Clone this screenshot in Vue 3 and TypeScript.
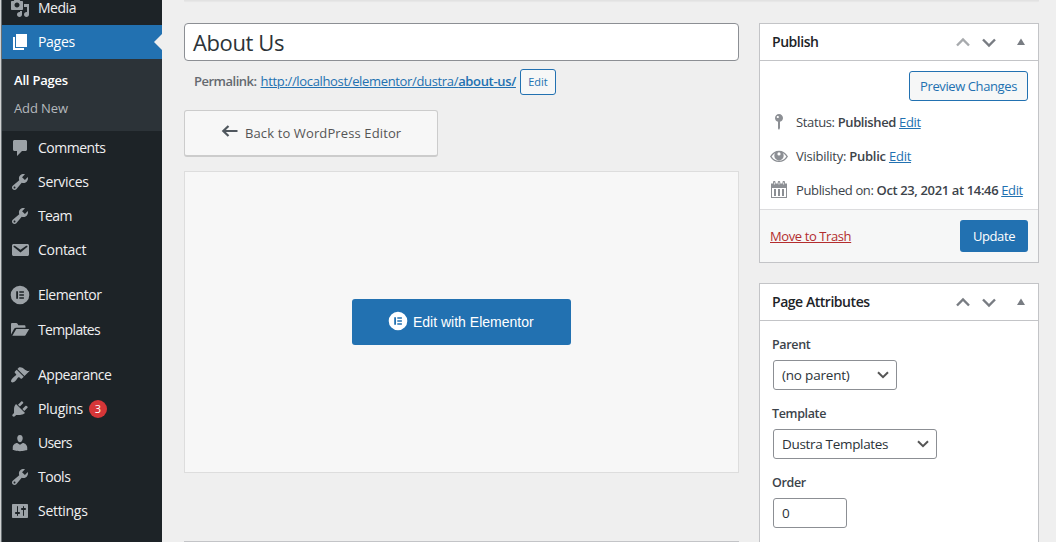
<script setup lang="ts">
interface MenuItem {
  label: string
  icon: string
  cls?: string
  badge?: number
}

const wrench =
  'M16.68 9.77c-1.34 1.34-3.3 1.67-4.95.99l-5.41 6.52c-.99.99-2.59.99-3.58 0s-.99-2.59 0-3.57l6.52-5.42c-.68-1.65-.35-3.61.99-4.95 1.28-1.28 3.12-1.62 4.72-1.06l-2.89 2.89 2.82 2.82 2.86-2.87c.53 1.58.18 3.39-1.08 4.65zM3.81 16.21c.4.39 1.04.39 1.43 0 .4-.4.4-1.04 0-1.43-.39-.4-1.03-.4-1.43 0-.39.39-.39 1.03 0 1.43z'

const topItems: MenuItem[] = [
  {
    label: 'Media',
    icon: 'M13 11V4c0-.55-.45-1-1-1h-1.67L9 1H5L3.67 3H2c-.55 0-1 .45-1 1v7c0 .55.45 1 1 1h10c.55 0 1-.45 1-1zM7 4.5c1.38 0 2.5 1.12 2.5 2.5S8.38 9.5 7 9.5 4.5 8.38 4.5 7 5.62 4.5 7 4.5zM14 6h5v10.5c0 1.38-1.12 2.5-2.5 2.5S14 17.88 14 16.5s1.12-2.5 2.5-2.5c.17 0 .34.02.5.05V9h-3V6zm-4 8.05V13h2v3.5c0 1.38-1.12 2.5-2.5 2.5S7 17.88 7 16.5 8.12 14 9.5 14c.17 0 .34.02.5.05z',
  },
  { label: 'Pages', icon: 'M6 15V2h11v13H6zm-1 1h9v2H3V5h2v11z', cls: 'current' },
]

const items: MenuItem[] = [
  {
    label: 'Comments',
    icon: 'M4.5 2h11c.8 0 1.5.7 1.5 1.5v8c0 .8-.7 1.5-1.5 1.5H12l-5 5v-5H4.5c-.8 0-1.5-.7-1.5-1.5v-8C3 2.700 3.700 2 4.500 2z',
  },
  { label: 'Services', icon: wrench, cls: 'loose' },
  { label: 'Team', icon: wrench, cls: 'snug' },
  {
    label: 'Contact',
    icon: 'M3.87 4h13.25C18.37 4 19 4.59 19 5.79v8.42c0 1.19-.63 1.79-1.88 1.79H3.87c-1.25 0-1.88-.6-1.88-1.79V5.79c0-1.2.63-1.79 1.88-1.79zm6.62 8.6l6.74-5.53c.24-.2.43-.66.13-1.07-.29-.41-.82-.42-1.17-.17l-5.7 3.86L4.8 5.83c-.35-.25-.88-.24-1.17.17-.3.41-.11.87.13 1.07z',
    cls: 'loose',
  },
  {
    label: 'Elementor',
    icon: 'M10 .7a9.300 9.300 0 1 0 0 18.600a9.300 9.300 0 1 0 0-18.600zM6.200 6.200H8v7.600H6.200zM9.300 6.200h4.600v1.600H9.300zM9.300 9.200h4.600v1.600H9.300zM9.300 12.200h4.600v1.600H9.300z',
    cls: 'gap',
  },
  {
    label: 'Templates',
    icon: 'M1 14.500V4.400C1 3.500 1.500 3 2.400 3h3.800c.6 0 1 .2 1.300.7l.9 1.600h5.800c.8 0 1.300.5 1.300 1.200v1.300H6.200c-1 0-1.700.4-2.200 1.200zM6.300 9h12.900L15.800 14.800c-.4.7-.8 1-1.600 1H2.300z',
    cls: 'tall snug',
  },
  {
    label: 'Appearance',
    icon: 'M14.48 11.06L7.41 3.99l1.5-1.5c.5-.56 2.3-.47 3.51.32 1.21.8 1.43 1.28 2.91 2.1 1.18.64 2.45 1.26 4.45.85zm-.71.71L6.7 4.7 4.93 6.47c-.39.39-.39 1.02 0 1.41l1.06 1.06c.39.39.39 1.03 0 1.42-.6.6-1.43 1.11-2.21 1.69-.35.26-.7.53-1.01.84C1.43 14.23.4 16.08 1.4 17.07c.99 1 2.84-.03 4.18-1.36.31-.31.58-.66.85-1.02.57-.78 1.08-1.61 1.69-2.21.39-.39 1.02-.39 1.41 0l1.06 1.06c.39.39 1.02.39 1.41 0z',
    cls: 'gap',
  },
  {
    label: 'Plugins',
    icon: 'M13.11 4.36L9.87 7.6 8 5.73l3.24-3.24c.35-.34 1.05-.2 1.56.32.52.51.66 1.21.31 1.55zm-8 1.77l.91-1.12 9.01 9.01-1.19.84c-.71.71-2.63 1.16-3.82 1.16H6.14L4.9 17.26c-.59.59-1.54.59-2.12 0-.59-.58-.59-1.53 0-2.12l1.24-1.24v-3.88c0-1.13.4-3.19 1.09-3.89zm7.26 3.97l3.24-3.24c.34-.35 1.04-.21 1.55.31.52.51.66 1.21.31 1.55l-3.24 3.25z',
    cls: 'loose',
    badge: 3,
  },
  {
    label: 'Users',
    icon: 'M10 9.25c-2.27 0-2.73-3.44-2.73-3.44C7 4.02 7.82 2 9.97 2c2.16 0 2.98 2.02 2.71 3.81 0 0-.41 3.44-2.68 3.44zm0 2.57L12.72 10c2.39 0 4.52 2.33 4.52 4.53v2.49s-3.65 1.13-7.24 1.13c-3.65 0-7.24-1.13-7.24-1.13v-2.49c0-2.25 1.94-4.48 4.47-4.48z',
    cls: 'snug',
  },
  { label: 'Tools', icon: wrench },
  {
    label: 'Settings',
    icon: 'M18 16V4c0-.55-.45-1-1-1H3c-.55 0-1 .45-1 1v12c0 .55.45 1 1 1h14c.55 0 1-.45 1-1zM8 11h1c.55 0 1 .45 1 1s-.45 1-1 1H8v1.5c0 .28-.22.5-.5.5s-.5-.22-.5-.5V13H6c-.55 0-1-.45-1-1s.45-1 1-1h1V5.5c0-.28.22-.5.5-.5s.5.22.5.5V11zm5-2h-1c-.55 0-1-.45-1-1s.45-1 1-1h1V5.5c0-.28.22-.5.5-.5s.5.22.5.5V7h1c.55 0 1 .45 1 1s-.45 1-1 1h-1v5.5c0 .28-.22.5-.5.5s-.5-.22-.5-.5V9z',
    cls: 'loose',
  },
]
</script>

<template>
  <div class="page">
    <nav class="sidebar">
      <a v-for="m in topItems" :key="m.label" class="item" :class="m.cls">
        <svg class="micon" viewBox="0 0 20 20"><path fill-rule="evenodd" :d="m.icon" /></svg>
        <span class="name">{{ m.label }}</span>
      </a>
      <div class="submenu">
        <a class="sub active">All Pages</a>
        <a class="sub">Add New</a>
      </div>
      <a v-for="m in items" :key="m.label" class="item" :class="m.cls">
        <svg class="micon" viewBox="0 0 20 20"><path fill-rule="evenodd" :d="m.icon" /></svg>
        <span class="name">{{ m.label }}</span>
        <span v-if="m.badge" class="badge">{{ m.badge }}</span>
      </a>
    </nav>

    <main class="body">
      <div class="notice"></div>
      <div class="columns">
        <section class="main-col">
          <div class="title">About Us</div>
          <div class="permalink">
            <strong>Permalink:</strong>
            <a class="url">http://localhost/elementor/dustra/<b>about-us/</b></a>
            <button class="btn small">Edit</button>
          </div>
          <button class="back">
            <svg class="arrow" viewBox="0 0 18 14">
              <path d="M7.500 2 2.300 7l5.200 5M2.500 7h14" fill="none" stroke="#50575e" stroke-width="2.200" />
            </svg>
            <span>Back to WordPress Editor</span>
          </button>
          <div class="canvas">
            <button class="elementor">
              <svg viewBox="0 0 20 20">
                <path
                  fill="#fff"
                  fill-rule="evenodd"
                  d="M10 .7a9.300 9.300 0 1 0 0 18.600a9.300 9.300 0 1 0 0-18.600zM6.200 6.200H8v7.600H6.200zM9.300 6.200h4.600v1.500H9.300zM9.300 9.250h4.600v1.500H9.300zM9.300 12.300h4.600v1.500H9.300z"
                />
              </svg>
              <span>Edit with Elementor</span>
            </button>
          </div>
          <div class="nextbox"></div>
        </section>

        <aside class="side-col">
          <section class="panel publish">
            <header class="head">
              <h2>Publish</h2>
              <svg class="handles" viewBox="0 0 76 20">
                <path d="M4 13.500 10 7.500l6 6" class="stroke faded" />
                <path d="M30 7.500l6 6 6-6" class="stroke" />
                <path d="M64 13h8l-4-6.500z" class="tri" />
              </svg>
            </header>
            <div class="preview-row"><button class="btn preview">Preview Changes</button></div>
            <div class="row status">
              <svg viewBox="0 0 20 20">
                <path fill-rule="evenodd" d="M14 6c0 1.860-1.280 3.410-3 3.860V16l-1 2-1-1.500V9.860C7.280 9.410 6 7.860 6 6c0-2.210 1.790-4 4-4s4 1.790 4 4zM7.700 5c0 .6.500 1.100 1.100 1.100S9.900 5.600 9.900 5 9.400 3.900 8.800 3.900 7.700 4.400 7.700 5z" />
              </svg>
              <p>Status: <b>Published</b> <a>Edit</a></p>
            </div>
            <div class="row visibility">
              <svg viewBox="0 0 20 20">
                <path fill-rule="evenodd" d="M1 10.500C3.300 6.700 6.300 4.700 10 4.700s6.700 2 9 5.800c-2.300 3.700-5.300 5.500-9 5.500s-6.700-1.800-9-5.500zm1.600 0c2 2.900 4.400 4.300 7.400 4.300s5.400-1.400 7.400-4.300C16.400 9 15.200 7.900 13.800 7.100c.6.700.9 1.600.9 2.600a4.700 4.700 0 0 1-9.400 0c0-1 .3-1.900.9-2.600C4.800 7.900 3.600 9 2.600 10.500zM10 6.300a1.600 1.600 0 1 0 0 3.200 1.600 1.600 0 0 0 0-3.200z" />
              </svg>
              <p>Visibility: <b>Public</b> <a>Edit</a></p>
            </div>
            <div class="row date">
              <svg viewBox="0 0 20 20">
                <path fill-rule="evenodd" d="M2 3.500h2V2.300c0-.8.500-1.300 1.250-1.300S6.500 1.500 6.500 2.300v1.200h2.250V2.300C8.750 1.500 9.250 1 10 1s1.250.5 1.250 1.300v1.200h2.250V2.300c0-.8.500-1.300 1.250-1.300S16 1.500 16 2.300v1.200h2V18H2zM3 8v9h14V8zM4.900 2.500v2h.8v-2zM9.600 2.500v2h.8v-2zM14.300 2.500v2h.8v-2zM5 9h2v7H5zM9 9h2v7H9zM13 9h2v7h-2z" />
              </svg>
              <p>Published on: <b>Oct 23, 2021 at 14:46</b> <a>Edit</a></p>
            </div>
            <footer class="foot">
              <a class="trash">Move to Trash</a>
              <button class="update">Update</button>
            </footer>
          </section>

          <section class="panel attrs">
            <header class="head">
              <h2>Page Attributes</h2>
              <svg class="handles" viewBox="0 0 76 20">
                <path d="M4 13.500 10 7.500l6 6" class="stroke" />
                <path d="M30 7.500l6 6 6-6" class="stroke" />
                <path d="M64 13h8l-4-6.500z" class="tri" />
              </svg>
            </header>
            <div class="fields">
              <label>Parent</label>
              <div class="field parent">
                <span>(no parent)</span>
                <svg viewBox="0 0 12 8"><path d="M1 1.200l5 5 5-5" /></svg>
              </div>
              <label>Template</label>
              <div class="field template">
                <span>Dustra Templates</span>
                <svg viewBox="0 0 12 8"><path d="M1 1.200l5 5 5-5" /></svg>
              </div>
              <label>Order</label>
              <div class="field order"><span>0</span></div>
            </div>
          </section>
        </aside>
      </div>
    </main>
  </div>
</template>

<style>
body {
  margin: 0;
  overflow: hidden;
}
</style>

<style scoped>
.page {
  display: flex;
  width: 1056px;
  height: 542px;
  overflow: hidden;
  background: #efefef;
  font-family: 'Open Sans', 'Noto Sans', sans-serif;
  font-size: 13px;
  color: #3c434a;
}
.page * {
  box-sizing: border-box;
}
button {
  font-family: inherit;
  margin: 0;
  padding: 0;
}
.sidebar {
  flex: none;
  width: 162px;
  height: 560px;
  margin-top: -9px;
  background: #1d2327;
  border-left: 1px solid #d0d2d3;
  box-shadow: inset 1px 0 0 #697074;
  padding-left: 1px;
}
.item {
  position: relative;
  display: flex;
  align-items: center;
  height: 34px;
  padding-left: 8px;
  color: #f0f0f1;
  font-size: 14px;
  letter-spacing: -0.48px;
}
.name {
  padding-bottom: 2px;
}
.loose {
  letter-spacing: -0.3px;
}
.snug {
  letter-spacing: -0.65px;
}
.micon {
  width: 20px;
  height: 20px;
  margin-right: 8px;
  fill: #9ca2a7;
}
.current {
  background: #2271b1;
  color: #fff;
  letter-spacing: -0.3px;
}
.current .micon {
  fill: #fff;
}
.current::after {
  content: '';
  position: absolute;
  right: 0;
  top: 9px;
  border: 8px solid transparent;
  border-left-width: 0;
  border-right-color: #efefef;
}
.gap {
  margin-top: 11px;
}
.tall {
  margin-top: 1px;
}
.submenu {
  height: 72px;
  padding: 7px 0 0 12px;
  background: #2c3338;
}
.sub {
  display: block;
  height: 28px;
  line-height: 28px;
  color: #b4b9bd;
  letter-spacing: -0.1px;
}
.sub.active {
  color: #fff;
  font-weight: 600;
  letter-spacing: -0.2px;
}
.badge {
  width: 18px;
  height: 18px;
  margin-left: 6px;
  border-radius: 9px;
  background: #d63638;
  color: #fff;
  font-size: 11px;
  line-height: 18px;
  text-align: center;
  letter-spacing: 0;
}
.body {
  flex: 1;
  padding: 0 17px 0 22px;
}
.notice {
  width: 855px;
  height: 1px;
  background: #e2e2e2;
  box-shadow: 0 1px 1px rgba(0, 0, 0, 0.04);
}
.columns {
  display: flex;
  gap: 20px;
  padding-top: 22px;
}
.main-col {
  width: 555px;
}
.title {
  height: 38px;
  padding-left: 8px;
  border: 1px solid #8c8f94;
  border-radius: 4px;
  background: #fff;
  color: #2c3338;
  font-size: 22px;
  line-height: 37px;
  letter-spacing: -0.4px;
}
.permalink {
  display: flex;
  align-items: center;
  height: 26px;
  margin-top: 8px;
  padding-left: 10px;
  color: #646970;
  letter-spacing: -0.34px;
}
.permalink strong {
  font-weight: 600;
  margin-right: 4px;
  padding-bottom: 2px;
  letter-spacing: -0.5px;
}
.url {
  padding-bottom: 2px;
  color: #2271b1;
  text-decoration: underline;
}
.url b {
  font-weight: 600;
}
.btn {
  height: 30px;
  width: 119px;
  border: 1px solid #2271b1;
  border-radius: 3px;
  background: #f6f7f7;
  color: #2271b1;
  font-size: 13px;
}
.preview {
  letter-spacing: -0.4px;
}
.btn.small {
  width: 36px;
  height: 26px;
  margin-left: 4px;
  padding-bottom: 1px;
  font-size: 11px;
}
.back {
  display: flex;
  align-items: center;
  width: 254px;
  height: 47px;
  margin-top: 15px;
  padding-left: 36px;
  border: 1px solid #ccc;
  border-bottom-width: 2px;
  border-radius: 3px;
  background: #f7f7f7;
  color: #555;
  font-size: 13px;
  letter-spacing: 0.12px;
}
.arrow {
  width: 18px;
  height: 14px;
  margin: -4px 6px 0 0;
}
.canvas {
  display: flex;
  align-items: center;
  justify-content: center;
  height: 302px;
  margin-top: 14px;
  border: 1px solid #ddd;
  background: #f7f7f7;
}
.elementor {
  display: flex;
  align-items: center;
  width: 219px;
  height: 46px;
  padding-left: 36px;
  border: 0;
  border-radius: 3px;
  background: #2271b1;
  color: #fff;
  font-family: 'Liberation Sans', Arial, sans-serif;
  font-size: 14px;
}
.elementor svg {
  width: 20px;
  height: 20px;
  margin: -3px 5px 0 0;
}
.nextbox {
  height: 40px;
  margin-top: 68px;
  border: 1px solid #c3c4c7;
  background: #fff;
}
.side-col {
  width: 280px;
}
.panel {
  border: 1px solid #c3c4c7;
  background: #fff;
}
.publish {
  height: 240px;
}
.attrs {
  height: 300px;
  margin-top: 20px;
}
.head {
  display: flex;
  align-items: center;
  justify-content: space-between;
  height: 37px;
  padding: 0 9px 0 12px;
  border-bottom: 1px solid #c3c4c7;
}
.head h2 {
  margin: 0;
  padding-bottom: 1px;
  font-size: 14px;
  font-weight: 600;
  color: #1d2327;
  letter-spacing: -0.46px;
}
.handles {
  width: 76px;
  height: 20px;
}
.stroke {
  fill: none;
  stroke: #787c82;
  stroke-width: 2.4;
}
.faded {
  stroke: #a7aaad;
}
.tri {
  fill: #787c82;
}
.preview-row {
  display: flex;
  justify-content: flex-end;
  padding: 10px 10px 0 0;
}
.row {
  display: flex;
  align-items: center;
  height: 34px;
  padding-left: 9px;
}
.status {
  margin-top: 4px;
}
.row svg {
  width: 20px;
  height: 20px;
  margin-right: 7px;
  fill: #8c8f94;
}
.row p {
  margin: 0;
  white-space: nowrap;
  letter-spacing: -0.37px;
}
.visibility p {
  letter-spacing: -0.25px;
}
.row b {
  font-weight: 600;
}
.row a {
  color: #2271b1;
  text-decoration: underline;
}
.foot {
  display: flex;
  align-items: center;
  justify-content: space-between;
  height: 53px;
  margin-top: 2px;
  padding: 0 10px;
  border-top: 1px solid #dcdcde;
  background: #f6f7f7;
}
.trash {
  padding-bottom: 1px;
  color: #b32d2e;
  text-decoration: underline;
  letter-spacing: -0.4px;
}
.update {
  width: 68px;
  height: 32px;
  border: 0;
  border-radius: 3px;
  background: #2271b1;
  color: #fff;
  font-size: 13px;
  font-weight: 500;
  letter-spacing: -0.4px;
}
.fields {
  display: flex;
  flex-direction: column;
  padding: 14px 0 0 13px;
}
.fields label {
  height: 19px;
  margin-left: -1px;
  line-height: 19px;
  font-weight: 600;
  font-size: 12.5px;
  letter-spacing: -0.35px;
}
.field {
  display: flex;
  align-items: center;
  justify-content: space-between;
  height: 30px;
  margin: 6px 0 14px;
  padding: 0 7px 0 8px;
  border: 1px solid #8c8f94;
  border-radius: 3px;
  color: #2c3338;
  font-size: 13.5px;
  letter-spacing: -0.2px;
}
.field span {
  padding-bottom: 1px;
}
.field svg {
  width: 12px;
  height: 8px;
  fill: none;
  stroke: #555;
  stroke-width: 2;
}
.parent {
  width: 124px;
}
.template {
  width: 164px;
  letter-spacing: -0.32px;
}
.order {
  width: 74px;
}
</style>
